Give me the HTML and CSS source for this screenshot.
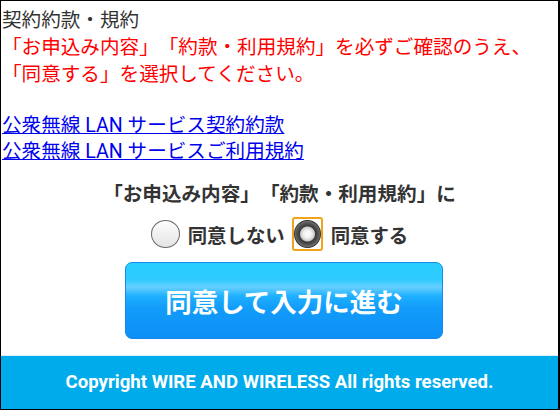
FILE: index.html
```html
<!DOCTYPE html>
<html lang="ja">
<head>
	<meta charset="UTF-8">
	<title>契約約款・規約</title>
	<link rel="stylesheet" href="styles.css">
</head>
<body>
	<div class="page">
		<div class="terms">
			<p class="terms-title">契約約款・規約</p>
			<p class="notice">「お申込み内容」「約款・利用規約」を必ずご確認のうえ、<br>「同意する」を選択してください。</p>
			<p class="links">
				<a href="#">公衆無線 LAN サービス契約約款</a><br>
				<a href="#">公衆無線 LAN サービスご利用規約</a>
			</p>
		</div>
		<div class="agree">
			<p class="agree-text">「お申込み内容」「約款・利用規約」に　</p>
			<div class="choices">
				<label><input type="radio" name="agree" value="0"><span>同意しない</span></label>
				<label><span class="focus"><input type="radio" name="agree" value="1" checked></span><span>同意する</span></label>
			</div>
			<span class="btn-next">同意して入力に進む</span>
		</div>
		<div class="footer">Copyright WIRE AND WIRELESS All rights reserved.</div>
	</div>
</body>
</html>
```

FILE: styles.css
```css
body{margin: 0;font-family: Roboto, "Noto Sans CJK JP", sans-serif;text-spacing-trim: space-all;}
p{margin: 0;}
.page{box-sizing: border-box;height: 410px;border: 1px solid #000;border-right-width: 2px;display: flex;flex-direction: column;}
.terms{padding: 6px 1px 0;font-size: 19.6px;line-height: 27px;color: #333;}
.notice{color: #f00;margin-bottom: 25px;}
.links{line-height: 26px;}
.links a{color: #00e;}
.agree{color: #333;font-weight: bold;font-size: 19.4px;}
.agree-text{margin-top: 16px;line-height: 27px;text-align: center;font-size: 19.6px;}
.choices{display: flex;justify-content: center;align-items: center;gap: 7px;margin-top: 9px;height: 34px;}
.choices label{display: flex;align-items: center;gap: 8px;}
.choices input{appearance: none;-webkit-appearance: none;margin: 0;width: 29px;height: 28px;border-radius: 50%;
	border: 1px solid #6a6a6a;box-sizing: border-box;
	background: linear-gradient(#fdfdfd, #e4e4e4);}
.choices input:checked{width: 27px;border-color: #333;
	background: radial-gradient(circle at 50% 50%, #fff 0, #f0f0f0 4px, #c8c8c8 7px, #3a3a3a 8px, #555 11px, #8a8a8a 14px);}
.focus{display: block;padding: 1px 0;border: 2px solid #f0a419;border-radius: 3px;line-height: 0;}
.btn-next{display: flex;align-items: center;justify-content: center;box-sizing: border-box;
	width: 318px;height: 77px;margin: 11px 0 0 124px;
	border: 1px solid #1589ee;border-radius: 7px;
	background: linear-gradient(#27ceff 0%, #2fcbff 22%, #66d0ff 32%, #1fb0ff 44%, #129cfa 60%, #0d8ff6 100%);
	color: #fff;font-size: 26.5px;cursor: pointer;}
.footer{margin-top: auto;height: 53px;line-height: 53px;border-top: 1px solid #d6f1fb;
	background-color: #00abeb;color: #fff;text-align: center;
	font-family: Roboto, "Liberation Sans", sans-serif;font-weight: bold;font-size: 18.6px;}
```
